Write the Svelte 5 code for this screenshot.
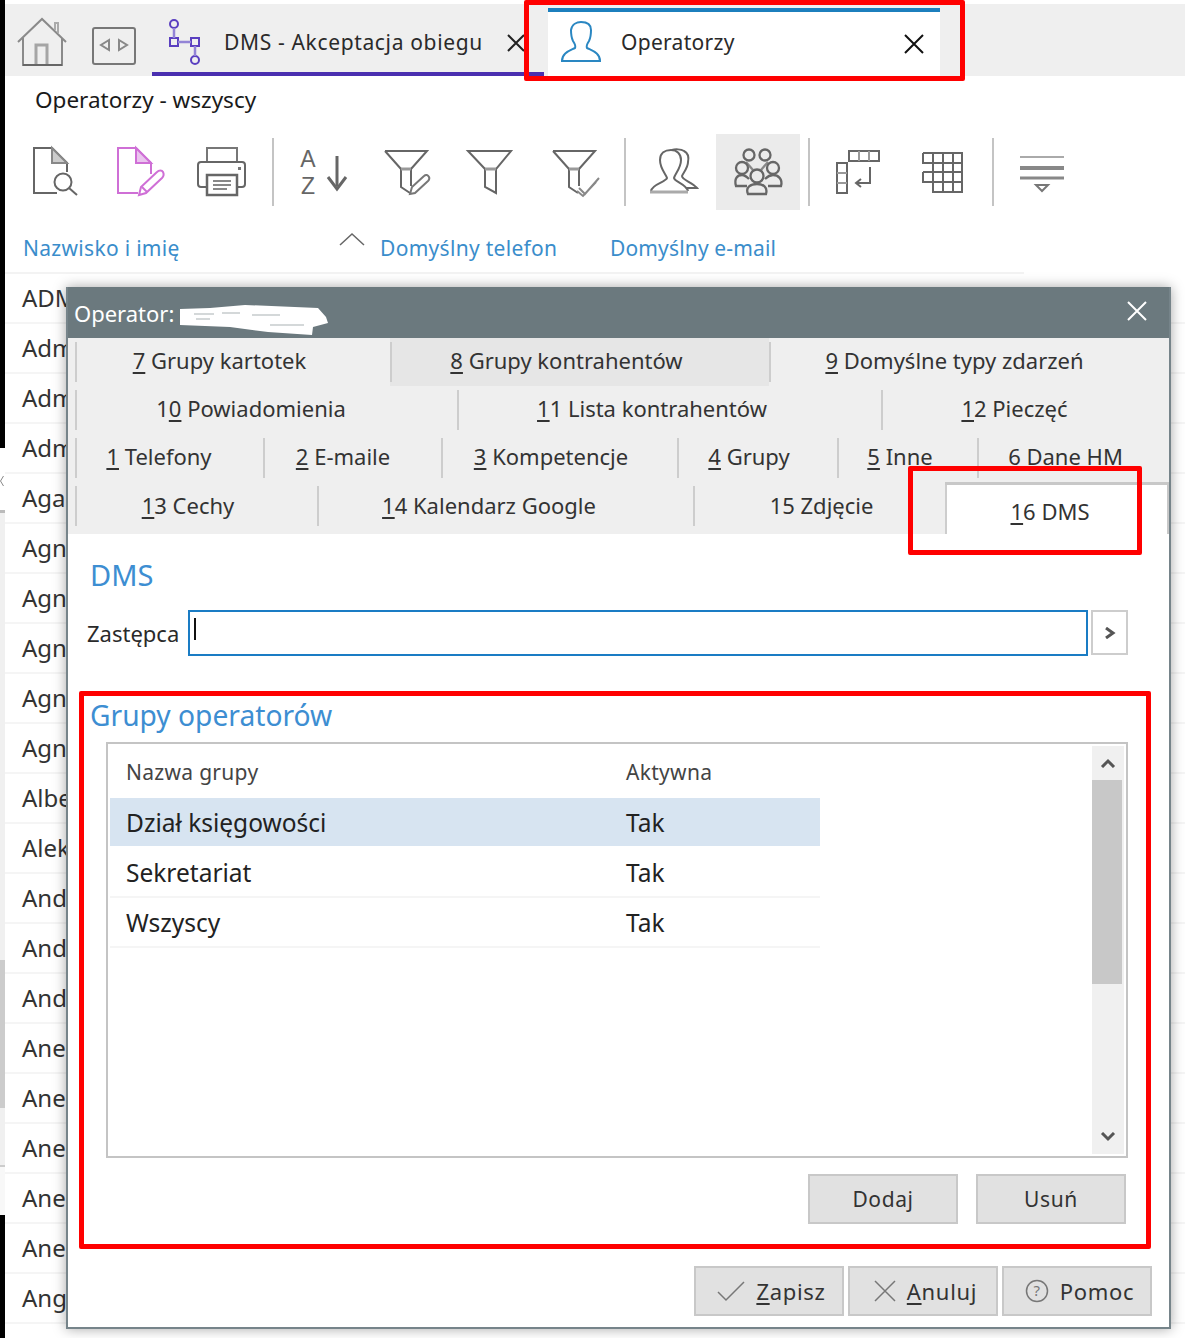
<script>
  const names = ['ADM','Adm','Adm','Adm','Aga','Agn','Agn','Agn','Agn','Agn','Albe','Alek','And','And','And','Ane','Ane','Ane','Ane','Ane','Ang'];
  const tabRows = [
    [{u:'7',r:' Grupy kartotek',w:315,p:26},{u:'8',r:' Grupy kontrahentów',w:379,p:26,dark:true},{u:'9',r:' Domyślne typy zdarzeń',w:401,p:30}],
    [{p0:'1',u:'0',r:' Powiadomienia',w:382,p:30},{u:'1',r:'1 Lista kontrahentów',w:424,p:34},{u:'1',r:'2 Pieczęć',w:289,p:22}],
    [{u:'1',r:' Telefony',w:188,p:20},{u:'2',r:' E-maile',w:178,p:18},{u:'3',r:' Kompetencje',w:236,p:16},{u:'4',r:' Grupy',w:160,p:16},{u:'5',r:' Inne',w:140,p:14},{u:'6',r:' Dane HM',w:193,p:16}],
    [{u:'1',r:'3 Cechy',w:242,p:16},{u:'1',r:'4 Kalendarz Google',w:376,p:32},{p0:'15 Zdjęcie',u:'',r:'',w:252,p:0,pl:5},{u:'1',r:'6 DMS',w:224,p:12,active:true}]
  ];
  const groups = [{n:'Dział księgowości',sel:true},{n:'Sekretariat'},{n:'Wszyscy'}];
</script>

<div class="screen">
  <div class="edge">
    <div class="e-black"></div>
    <div class="e-peek"><svg viewBox="0 0 5 12"><path d="M3.5 1L0.5 6L3.5 11" fill="none" stroke="#888" stroke-width="1"/></svg></div>
    <div class="e-grey"><div class="e-thumb"></div></div>
    <div class="e-low"></div>
    <div class="e-black2"></div>
  </div>

  <div class="main">
    <div class="tabbar">
      <svg class="nav home" viewBox="14 4 58 72"><g fill="none" stroke="#8a8a8a" stroke-width="2"><path d="M18 42L42 19L66 42"/><path d="M23 38V65H62V38"/><path d="M36 65V45H47V65" stroke-width="3" stroke="#a5a5a5"/><path d="M55 30V23H58V33" stroke="#aaa"/></g><path d="M23 65H62" stroke="#666" stroke-width="2"/></svg>
      <svg class="nav code" viewBox="72 4 80 72"><rect x="93" y="28" width="42" height="36" rx="2" fill="none" stroke="#777" stroke-width="2"/><path d="M109 40L101 45L109 50Z M119 40L127 45L119 50Z" fill="none" stroke="#888" stroke-width="2"/></svg>
      <div class="tab tab-dms">
        <svg class="flow" viewBox="160 14 48 56"><g fill="none" stroke="#5a3fc0" stroke-width="2"><circle cx="174" cy="24" r="4"/><rect x="170" y="38" width="8" height="8"/><rect x="191" y="38" width="8" height="8"/><circle cx="195" cy="60" r="4"/></g><path d="M174 28V38M178 42H191M195 46V56" stroke="#9384d6" stroke-width="2.5"/></svg>
        <span class="tab-text">DMS - Akceptacja obiegu</span>
        <svg class="close c1" viewBox="0 0 18 18"><path d="M1 1L17 17M17 1L1 17" stroke="#222" stroke-width="2"/></svg>
      </div>
      <div class="tab tab-op">
        <svg class="person" viewBox="0 0 40 42"><path d="M1 40C1 32 8 30 14 27C15 25 14 23 12 20C10 16 10 12 10 9C11 3 16 1 20 1C25 1 30 3 30 9C30 13 30 16 28 20C26 23 25 25 26 27C32 30 39 32 39 40Z" fill="none" stroke="#2a87c2" stroke-width="2"/></svg>
        <span class="tab-text op">Operatorzy</span>
        <svg class="close c2" viewBox="0 0 20 20"><path d="M1 1L19 19M19 1L1 19" stroke="#111" stroke-width="2"/></svg>
      </div>
    </div>

    <div class="title">Operatorzy - wszyscy</div>

    <div class="toolbar">
      <span class="cell"><svg viewBox="0 0 84 76"><g fill="none" stroke="#666" stroke-width="2"><path d="M44 59H21V14H39L54 29V38"/><path d="M39 14V29H54Z" fill="#ccc" stroke="#888"/><circle cx="50" cy="48" r="8.5"/><path d="M56 54L64 61"/></g></svg></span>
      <span class="cell"><svg viewBox="0 0 84 76"><g fill="none" stroke="#cf6fd6" stroke-width="2"><path d="M41 59H21V14H39L54 29V40"/><path d="M39 14V29H54Z" fill="#eac4ee"/><path d="M42 61L44 53L60 38C62 36 65 36 66 38C67 40 67 42 65 44L49 59Z"/><path d="M45 53L50 58" /></g></svg></span>
      <span class="cell"><svg viewBox="0 0 84 76"><g fill="none" stroke="#666" stroke-width="2"><path d="M26 28V14H56V28" stroke="#777"/><path d="M26 53H20Q17 53 17 50V31Q17 28 20 28H61Q64 28 64 31V50Q64 53 61 53H56"/><rect x="26" y="41" width="30" height="20" stroke-width="2.5"/><path d="M32 47H50M32 51H50M32 55H46" stroke="#888"/></g><rect x="57" y="33" width="3" height="3" fill="#777"/></svg></span>
      <span class="sep"></span>
      <span class="cell azcell"><span class="azt"><b>A</b><b>Z</b></span><svg viewBox="0 0 84 76"><path d="M56 22V52" stroke="#666" stroke-width="3"/><path d="M47 43L56 55L65 43" fill="none" stroke="#666" stroke-width="3"/></svg></span>
      <span class="cell"><svg viewBox="0 0 84 76"><g fill="none" stroke="#666" stroke-width="2"><path d="M20 17H62L46 35V52M36 35V53L45 59M20 17L36 35"/><path d="M36 35H46" stroke="#999" stroke-width="3"/><path d="M45 60L47 53L59 42C61 40 63 41 64 43C65 45 64 46 63 47L50 59Z" stroke="#777"/></g></svg></span>
      <span class="cell"><svg viewBox="0 0 84 76"><g fill="none" stroke="#666" stroke-width="2"><path d="M19 17H62L47 35V59L36 53V35Z"/><path d="M36 35H47" stroke="#999" stroke-width="3"/></g></svg></span>
      <span class="cell"><svg viewBox="0 0 84 76"><g fill="none" stroke="#666" stroke-width="2"><path d="M20 17H62L46 35V52M36 35V53L45 59M20 17L36 35"/><path d="M36 35H46" stroke="#999" stroke-width="3"/><path d="M46 54L52 60L66 44M44 57L50 62L63 48" stroke="#888"/></g></svg></span>
      <span class="sep s2"></span>
      <span class="cell"><svg viewBox="0 0 84 76"><g fill="none" stroke="#666" stroke-width="2"><path d="M19 57C20 50 34 48 35 44C34 40 28 35 28 26C28 19 33 16 39 16C45 16 49 20 49 26C49 34 43 40 42 44C43 48 54 50 56 57" /><path d="M40 16C43 15 49 15 52 17C56 19 57 23 56 28C56 34 51 39 50 42C50 46 60 48 65 54H54"/><path d="M18 58H56" stroke="#aaa" stroke-width="3"/></g></svg></span>
      <span class="cell active"><svg viewBox="0 0 84 76"><g fill="none" stroke="#666" stroke-width="2.3"><circle cx="33" cy="21" r="5.5"/><circle cx="49" cy="21" r="5.5"/><path d="M30 28L37 36M52 28L45 36" stroke="#888"/><circle cx="26" cy="34" r="6"/><circle cx="57" cy="34" r="6"/><circle cx="41" cy="42" r="6.5"/><path d="M31 52H20C18 45 21 41 26 41C28 41 30 42 33 45"/><path d="M52 52H65C67 45 62 41 57 41C55 41 52 42 49 45"/><path d="M32 60C29 53 35 50 41 50C47 50 52 53 50 60Z"/></g></svg></span>
      <span class="sep b"></span>
      <span class="cell"><svg viewBox="0 0 84 76"><g fill="none" stroke="#666" stroke-width="2"><rect x="33" y="17" width="30" height="10"/><path d="M43 17V27M53 17V27" stroke="#999"/><rect x="21" y="29" width="10" height="30"/><path d="M21 39H31M21 49H31" stroke="#999"/><path d="M54 33V49H41"/><path d="M45 45L40 49L45 53"/></g></svg></span>
      <span class="cell"><svg viewBox="0 0 84 76"><g fill="none" stroke="#666" stroke-width="2"><path d="M23 19H62V58H33V19M43 19V58M53 19V58" /><path d="M23 19V29H62M23 38H62M23 38V48H62" /></g></svg></span>
      <span class="sep b"></span>
      <span class="cell"><svg viewBox="0 0 84 76"><path d="M20 23H64" stroke="#aaa" stroke-width="2"/><path d="M20 34H64" stroke="#888" stroke-width="4"/><path d="M20 44H64" stroke="#888" stroke-width="3"/><path d="M36 51H48L42 57Z" fill="none" stroke="#777" stroke-width="2"/></svg></span>
    </div>

    <div class="columns">
      <span class="col c-name">Nazwisko i imię</span>
      <svg class="sort" viewBox="0 0 26 14"><path d="M1 13L13 2L25 13" fill="none" stroke="#666" stroke-width="1.5"/></svg>
      <span class="col c-tel">Domyślny telefon</span>
      <span class="col c-mail">Domyślny e-mail</span>
    </div>

    <div class="rows">
      {#each names as n}
        <div class="row">{n}</div>
      {/each}
    </div>
  </div>

  <div class="dialog">
    <div class="dlg-head">
      <span>Operator:</span>
      <svg class="redact" viewBox="0 0 150 30"><path d="M0 4L30 3L65 0L138 3L146 12L148 18L133 22L132 30L88 27L50 22L0 20Z" fill="#fff"/><path d="M14 9H34M16 14H30M42 8H60M72 10H100M90 20H124" stroke="#d4d8d9" stroke-width="2" fill="none"/></svg>
      <svg class="dlg-x" viewBox="0 0 20 20"><path d="M1 1L19 19M19 1L1 19" stroke="#fff" stroke-width="2"/></svg>
    </div>

    <div class="strip">
      {#each tabRows as tr, i}
        <div class="trow" class:last={i === 3}>
          {#each tr as t}
            <div class="t" class:dark={t.dark} class:on={t.active} style="width:{t.w}px;padding-right:{t.p}px;padding-left:{t.pl || 0}px">
              <span>{t.p0 || ''}<u>{t.u}</u>{t.r}</span>
            </div>
          {/each}
        </div>
      {/each}
    </div>

    <div class="body">
      <div class="h dms">DMS</div>
      <div class="zast">
        <span class="zlabel">Zastępca</span>
        <div class="zinput"><i></i></div>
        <div class="zbtn"><svg viewBox="0 0 12 12"><path d="M2 1L9 6L2 11" fill="none" stroke="#555" stroke-width="3"/></svg></div>
      </div>
      <div class="h grp">Grupy operatorów</div>
      <div class="box">
        <div class="tbl">
          <div class="thead"><span class="n">Nazwa grupy</span><span>Aktywna</span></div>
          {#each groups as g}
            <div class="tr" class:sel={g.sel}><span class="n">{g.n}</span><span>Tak</span></div>
          {/each}
        </div>
        <div class="scroll">
          <div class="sb"><svg viewBox="0 0 16 10"><path d="M2 9L8 3L14 9" fill="none" stroke="#555" stroke-width="3"/></svg></div>
          <div class="thumb"></div>
          <div class="track"></div>
          <div class="sb"><svg viewBox="0 0 16 10"><path d="M2 1L8 7L14 1" fill="none" stroke="#555" stroke-width="3"/></svg></div>
        </div>
      </div>
      <div class="acts">
        <div class="btn">Dodaj</div>
        <div class="btn">Usuń</div>
      </div>
      <div class="foot">
        <div class="btn"><svg class="bi" viewBox="0 0 28 22"><path d="M1 12L9 20L27 2" fill="none" stroke="#777" stroke-width="1.5"/></svg><span><u>Z</u>apisz</span></div>
        <div class="btn"><svg class="bi x" viewBox="0 0 22 22"><path d="M1 1L21 21M21 1L1 21" fill="none" stroke="#777" stroke-width="1.5"/></svg><span><u>A</u>nuluj</span></div>
        <div class="btn"><svg class="bi q" viewBox="0 0 24 24"><circle cx="12" cy="12" r="10.5" fill="none" stroke="#777" stroke-width="1.5"/><text x="12" y="17" text-anchor="middle" class="qm">?</text></svg><span>Pomoc</span></div>
      </div>
    </div>
  </div>

  <div class="red r-tab"></div>
  <div class="red r-dms"></div>
  <div class="red r-grp"></div>
</div>

<style>
  :global(body) { margin: 0; background: #fff; }
  .screen {
    position: relative; display: flex; width: 1185px; height: 1338px; overflow: hidden;
    font-family: "Noto Sans", "Open Sans", sans-serif; color: #2a2a2a; background: #fff; font-size: 21px;
  }
  u { text-underline-offset: 3px; text-decoration-thickness: 2px; }
  .edge { width: 5px; flex: none; display: flex; flex-direction: column; }
  .e-black { height: 448px; background: #000; flex: none; }
  .e-peek { height: 65px; flex: none; box-sizing: border-box; padding-top: 27px; border-bottom: 3px solid #bbb; background: #fff; }
  .e-peek svg { display: block; width: 5px; height: 12px; }
  .e-grey { height: 652px; flex: none; background: #f0f0f0; padding-top: 447px; box-sizing: border-box; }
  .e-thumb { height: 148px; background: #ccc; }
  .e-low { height: 50px; flex: none; background: #f8f8f8; border-top: 2px solid #ccc; box-sizing: border-box; }
  .e-black2 { flex: 1; background: #000; }

  .main { flex: 1; min-width: 0; }
  .tabbar { margin-top: 4px; height: 72px; background: #efefef; display: flex; }
  .nav { height: 72px; display: block; flex: none; }
  .home { width: 58px; margin-left: 9px; }
  .code { width: 80px; }
  .tab { flex: none; width: 392px; display: flex; align-items: center; position: relative; box-sizing: border-box; }
  .tab-dms { border-bottom: 4px solid #4a2fb0; padding-top: 8px; }
  .flow { width: 48px; height: 56px; margin-left: 8px; }
  .tab-text { margin-left: 16px; letter-spacing: .65px; }
  .close { position: absolute; }
  .c1 { width: 18px; height: 18px; left: 355px; top: 30px; }
  .c2 { width: 20px; height: 20px; left: 356px; top: 22px; }
  .tab-op { margin: 4px 0 0 4px; height: 68px; background: #fff; border-top: 4px solid #1c7fbd; padding-bottom: 4px; }
  .person { width: 40px; height: 42px; margin-left: 13px; }
  .tab-text.op { margin-left: 20px; letter-spacing: .3px; }
  .title { height: 58px; padding: 7px 0 0 30px; box-sizing: border-box; line-height: 34px; color: #1a1a1a; font-size: 22.5px; }
  .toolbar { height: 76px; padding-left: 8px; display: flex; }
  .cell { width: 84px; height: 76px; flex: none; position: relative; }
  .cell.active { background: #ebebeb; }
  .cell svg { display: block; width: 84px; height: 76px; }
  .sep { width: 2px; height: 68px; margin: 4px 7px 0 7px; background: #c4c4c4; flex: none; }
  .sep.s2 { margin-right: 6px; }
  .sep.b { margin: 4px 6px 0 8px; }
  .azt { position: absolute; left: 17px; top: 12px; width: 20px; display: flex; flex-direction: column; align-items: center; }
  .azt b { font-family: "Liberation Sans", sans-serif; font-size: 23px; line-height: 27px; font-weight: 400; color: #666; }
  .columns { height: 64px; box-sizing: border-box; border-bottom: 2px solid #f3f3f3; position: relative; width: 1019px; }
  .col { position: absolute; top: 22px; color: #3a8dcb; line-height: 32px; letter-spacing: .3px; }
  .c-name { left: 18px; }
  .c-tel { left: 375px; }
  .c-mail { left: 605px; letter-spacing: .15px; }
  .sort { position: absolute; left: 334px; top: 22px; width: 26px; height: 14px; }
  .row { height: 50px; box-sizing: border-box; border-bottom: 2px solid #f5f5f5; padding-left: 17px; line-height: 48px; color: #333; font-size: 24px; }

  .dialog {
    position: absolute; left: 66px; top: 287px; width: 1105px; height: 1042px;
    background: #fff; box-sizing: border-box; border: 2px solid #76848a; border-top: 0;
    box-shadow: 0 0 12px rgba(0,0,0,.35); display: flex; flex-direction: column;
  }
  .dlg-head { height: 51px; flex: none; background: #6b797e; color: #fff; position: relative; line-height: 52px; padding-left: 6px; font-size: 22px; }
  .redact { position: absolute; left: 112px; top: 18px; width: 150px; height: 30px; }
  .dlg-x { position: absolute; left: 1059px; top: 14px; width: 20px; height: 20px; }
  .strip { height: 196px; flex: none; background: #efefef; padding-left: 7px; box-sizing: border-box; }
  .trow { display: flex; height: 48px; }
  .trow.last { height: 52px; }
  .t { flex: none; box-sizing: border-box; display: flex; align-items: center; justify-content: center; position: relative; white-space: pre; color: #333; font-size: 22px; padding-bottom: 4px; }
  .t::before { content: ""; position: absolute; left: 0; top: 4px; bottom: 4px; width: 2px; background: #cdcdcd; }
  .trow.last .t { padding-bottom: 7px; }
  .trow.last .t::before { bottom: 8px; }
  .t.dark { background: #e6e6e6; }
  .trow.last .t.on { background: #fff; border-top: 3px solid #c8c8c8; border-right: 2px solid #c8c8c8; padding-top: 2px; padding-bottom: 0; }
  .trow.last .t.on::before { top: 0; bottom: 0; }
  .body { flex: 1; min-height: 0; }
  .h { color: #3d8ed2; font-size: 29px; line-height: 40px; margin-left: 22px; }
  .dms { margin-top: 21px; }
  .zast { display: flex; margin: 15px 0 0 19px; }
  .zlabel { width: 101px; line-height: 46px; flex: none; font-size: 22px; }
  .zinput { width: 900px; height: 46px; flex: none; box-sizing: border-box; border: 2px solid #1a7cc4; padding: 6px 0 0 4px; }
  .zinput i { display: block; width: 2px; height: 22px; background: #111; }
  .zbtn { width: 37px; height: 45px; margin-left: 3px; flex: none; box-sizing: border-box; border: 2px solid #cdcdcd; display: flex; align-items: center; justify-content: center; }
  .zbtn svg { width: 12px; height: 12px; }
  .grp { margin-top: 39px; font-size: 28.2px; }
  .box { margin: 7px 0 0 38px; width: 1022px; height: 416px; box-sizing: border-box; border: 2px solid #c4c4c4; display: flex; padding: 2px; }
  .tbl { width: 710px; flex: none; }
  .thead { height: 52px; display: flex; align-items: center; color: #444; font-size: 21px; letter-spacing: .3px; }
  .n { width: 516px; padding-left: 16px; box-sizing: border-box; flex: none; }
  .tr { height: 50px; display: flex; align-items: center; box-sizing: border-box; border-bottom: 2px solid #f5f5f5; font-size: 24.5px; color: #222; }
  .tr.sel { background: #d7e4f1; background-clip: padding-box; border-bottom-color: #fff; }
  .scroll { margin-left: auto; width: 32px; display: flex; flex-direction: column; background: #f0f0f0; }
  .sb { height: 34px; flex: none; display: flex; align-items: center; justify-content: center; }
  .sb svg { width: 16px; height: 10px; }
  .thumb { height: 204px; width: 30px; flex: none; background: #c8c8c8; }
  .track { flex: 1; }
  .acts { display: flex; justify-content: flex-end; gap: 18px; margin-top: 16px; padding-right: 43px; }
  .foot { display: flex; justify-content: flex-end; gap: 4px; margin-top: 42px; padding-right: 17px; }
  .btn { width: 150px; height: 50px; box-sizing: border-box; background: #e1e1e1; border: 2px solid #c8c8c8; display: flex; align-items: center; justify-content: center; gap: 10px; letter-spacing: .6px; color: #333; }
  .foot .btn { font-size: 22px; letter-spacing: .7px; gap: 11px; padding-left: 5px; }
  .bi { width: 28px; height: 22px; }
  .bi.x { width: 22px; }
  .bi.q { width: 24px; height: 24px; }
  .qm { font-size: 15px; fill: #777; font-family: "Noto Sans", sans-serif; }

  .red { position: absolute; border: 5px solid #f00; border-radius: 2px; box-sizing: border-box; pointer-events: none; }
  .r-tab { left: 524px; top: 0; width: 441px; height: 81px; }
  .r-dms { left: 908px; top: 466px; width: 234px; height: 89px; }
  .r-grp { left: 79px; top: 691px; width: 1072px; height: 558px; }
</style>
